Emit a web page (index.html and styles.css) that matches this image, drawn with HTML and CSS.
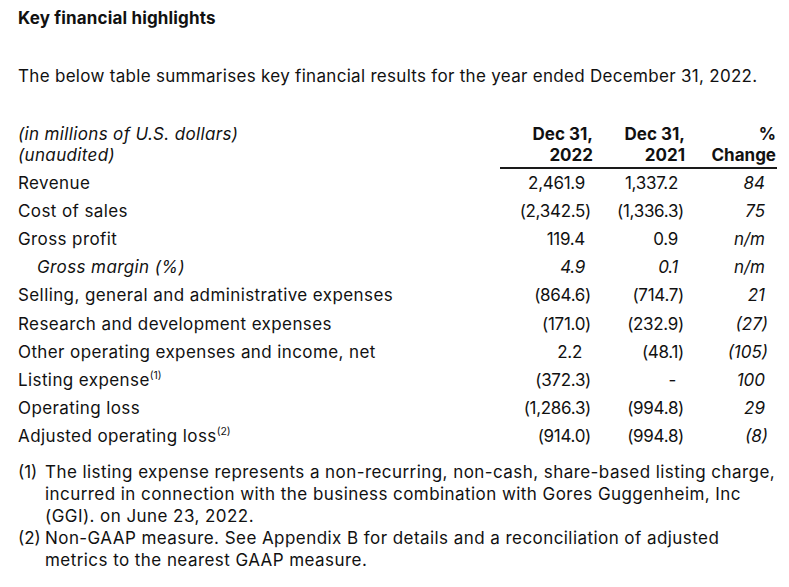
FILE: index.html
```html
<!DOCTYPE html>
<html>
<head>
<meta charset="utf-8">
<link rel="stylesheet" href="styles.css">
</head>
<body>
<div class="page">
  <h1 class="title">Key financial highlights</h1>
  <p class="intro">The below table summarises key financial results for the year ended December 31, 2022.</p>
  <table class="fin">
    <thead>
      <tr>
        <th class="lbl it">(in millions of U.S. dollars)<br>(unaudited)</th>
        <th class="hd c1">Dec 31,<br>2022</th>
        <th class="hd c2">Dec 31,<br>2021</th>
        <th class="hd c3">%<br>Change</th>
      </tr>
    </thead>
    <tbody>
      <tr><td class="lbl">Revenue</td><td class="num">2,461.9</td><td class="num">1,337.2</td><td class="pc">84</td></tr>
      <tr><td class="lbl">Cost of sales</td><td class="num neg">(2,342.5)</td><td class="num neg">(1,336.3)</td><td class="pc">75</td></tr>
      <tr><td class="lbl">Gross profit</td><td class="num">119.4</td><td class="num">0.9</td><td class="pc">n/m</td></tr>
      <tr><td class="lbl it indent">Gross margin (%)</td><td class="num it">4.9</td><td class="num it">0.1</td><td class="pc">n/m</td></tr>
      <tr><td class="lbl">Selling, general and administrative expenses</td><td class="num neg">(864.6)</td><td class="num neg">(714.7)</td><td class="pc">21</td></tr>
      <tr><td class="lbl">Research and development expenses</td><td class="num neg">(171.0)</td><td class="num neg">(232.9)</td><td class="pc neg">(27)</td></tr>
      <tr><td class="lbl">Other operating expenses and income, net</td><td class="num sp">2.2</td><td class="num neg">(48.1)</td><td class="pc neg">(105)</td></tr>
      <tr><td class="lbl">Listing expense<sup>(1)</sup></td><td class="num neg">(372.3)</td><td class="num dash">-</td><td class="pc">100</td></tr>
      <tr><td class="lbl">Operating loss</td><td class="num neg">(1,286.3)</td><td class="num neg">(994.8)</td><td class="pc">29</td></tr>
      <tr><td class="lbl">Adjusted operating loss<sup>(2)</sup></td><td class="num neg">(914.0)</td><td class="num neg">(994.8)</td><td class="pc neg">(8)</td></tr>
    </tbody>
  </table>
  <ol class="notes">
    <li><span class="mk">(1)</span><span class="tx">The listing expense represents a non-recurring, non-cash, share-based listing charge,<br>incurred in connection with the business combination with Gores Guggenheim, Inc<br>(GGI). on June 23, 2022.</span></li>
    <li><span class="mk">(2)</span><span class="tx">Non-GAAP measure. See Appendix B for details and a reconciliation of adjusted<br>metrics to the nearest GAAP measure.</span></li>
  </ol>
</div>
</body>
</html>
```

FILE: styles.css
```css
html, body { margin: 0; padding: 0; background: #fff; }
body {
  font-family: Inter, "Liberation Sans", sans-serif;
  color: #111;
}
.page { padding: 8px 10px 0 18px; }
.title {
  font-size: 17px;
  font-weight: 700;
  margin: 0;
  line-height: 20px;
  letter-spacing: 0.15px;
}
.intro {
  margin: 35.5px 0 0 0;
  font-size: 17px;
  line-height: 24px;
  letter-spacing: 0.3px;
  white-space: nowrap;
}
.fin {
  margin-top: 36px;
  border-collapse: collapse;
  width: 757px;
  table-layout: fixed;
  font-size: 17px;
  letter-spacing: 0.4px;
}
.fin th, .fin td { padding: 0; }
.fin th {
  font-weight: 700;
  line-height: 21px;
  vertical-align: bottom;
  text-align: right;
  letter-spacing: 0;
  padding-bottom: 1px;
}
.fin th.lbl {
  font-weight: 400;
  text-align: left;
  width: 482px;
  border-bottom: 2px solid transparent;
  letter-spacing: 0.35px;
}
.fin th.hd { border-bottom: 2px solid #1a1a1a; }
.fin th.c1 { width: 93px; }
.fin th.c2 { width: 92px; padding-right: 1px; }
.fin th.c3 { width: 90px; padding-right: 1px; }
.fin td {
  height: 28.2px;
  line-height: 20px;
  vertical-align: middle;
  white-space: nowrap;
}
.lbl { text-align: left; }
.it { font-style: italic; }
.fin td.indent { padding-left: 19px; }
.fin td.num { text-align: right; padding-right: 8px; letter-spacing: -0.3px; }
.fin td.num.neg { padding-right: 2px; }
.fin td.num.sp { padding-right: 11px; }
.fin td.num.dash { padding-right: 10px; }
.fin td.pc { text-align: right; font-style: italic; padding-right: 12px; letter-spacing: 0; }
.fin td.pc.neg { padding-right: 9px; }
sup {
  font-size: 10.5px;
  line-height: 0;
  vertical-align: 7px;
  letter-spacing: 0;
}
.notes {
  list-style: none;
  margin: 11px 0 0 0;
  padding: 0;
  font-size: 17px;
  line-height: 22px;
  letter-spacing: 0.44px;
  white-space: nowrap;
}
.notes li { display: flex; }
.notes .mk { width: 27px; flex: none; letter-spacing: 0; }
.notes .tx { flex: 1; }
```
